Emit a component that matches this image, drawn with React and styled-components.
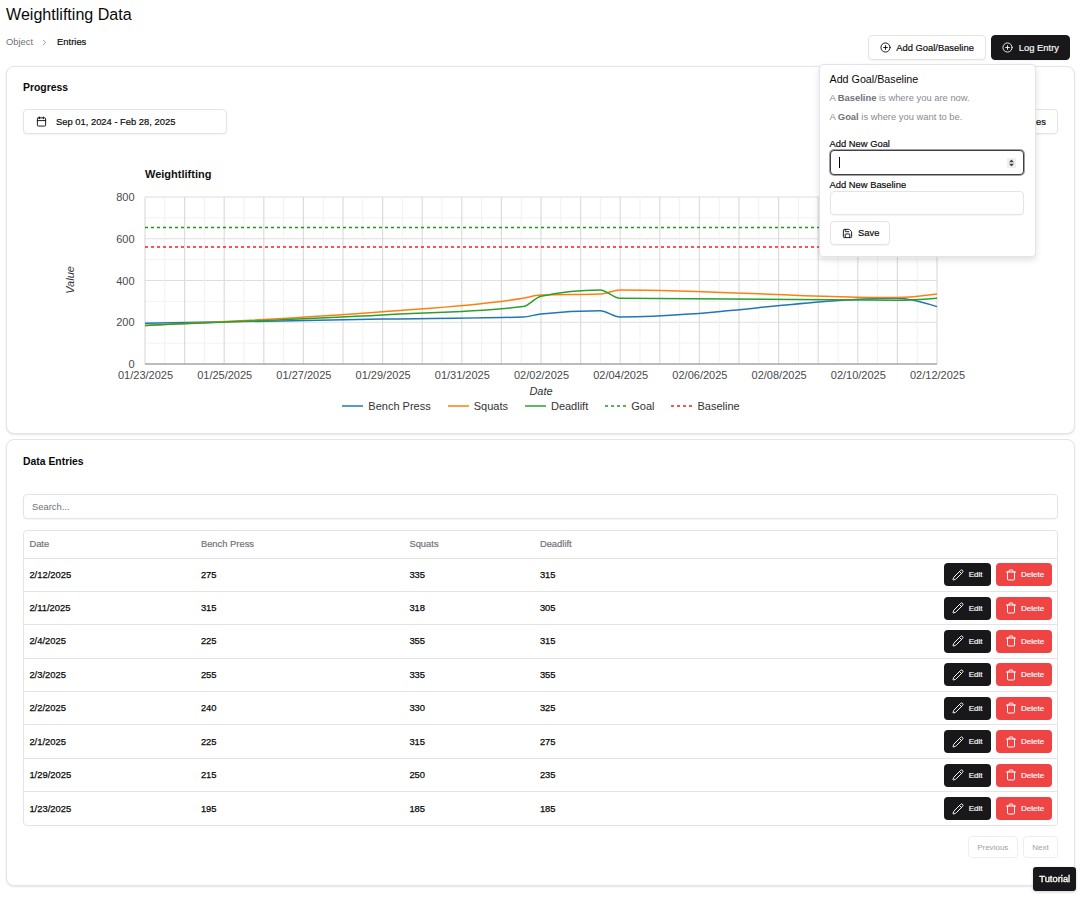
import { useMemo } from 'react';
import styled, { createGlobalStyle, css } from 'styled-components';
import { CirclePlus, Calendar, ChevronRight, Save, Pencil, Trash } from 'lucide-react';

const entries = [
	{ date: '2/12/2025', bench: 275, squats: 335, deadlift: 315 },
	{ date: '2/11/2025', bench: 315, squats: 318, deadlift: 305 },
	{ date: '2/4/2025', bench: 225, squats: 355, deadlift: 315 },
	{ date: '2/3/2025', bench: 255, squats: 335, deadlift: 355 },
	{ date: '2/2/2025', bench: 240, squats: 330, deadlift: 325 },
	{ date: '2/1/2025', bench: 225, squats: 315, deadlift: 275 },
	{ date: '1/29/2025', bench: 215, squats: 250, deadlift: 235 },
	{ date: '1/23/2025', bench: 195, squats: 185, deadlift: 185 },
];

// x position of each entry, newest first (the points don't sit exactly on day ticks)
const pointX = [937, 897, 620, 600, 541, 523, 382.6, 145];

const PLOT = { left: 145, right: 937, top: 197, bottom: 364 };
const DAY = (PLOT.right - PLOT.left) / 20;
const yOf = (v) => PLOT.bottom - (v / 800) * (PLOT.bottom - PLOT.top);

const xTicks = ['01/23/2025', '01/25/2025', '01/27/2025', '01/29/2025', '01/31/2025', '02/02/2025', '02/04/2025', '02/06/2025', '02/08/2025', '02/10/2025', '02/12/2025'];

const sign = (n) => (n < 0 ? -1 : 1);

// monotone cubic, same idea as d3 curveMonotoneX
function monotonePath(pts) {
	const n = pts.length;
	const dx = [];
	const m = [];
	for (let i = 0; i < n - 1; i++) {
		dx[i] = pts[i + 1][0] - pts[i][0];
		m[i] = (pts[i + 1][1] - pts[i][1]) / dx[i];
	}
	const t = [m[0]];
	for (let i = 1; i < n - 1; i++) {
		const p = (m[i - 1] * dx[i] + m[i] * dx[i - 1]) / (dx[i - 1] + dx[i]);
		t[i] = (sign(m[i - 1]) + sign(m[i])) * Math.min(Math.abs(m[i - 1]), Math.abs(m[i]), 0.5 * Math.abs(p)) || 0;
	}
	t[n - 1] = m[n - 2];
	t[0] = (3 * m[0] - t[1]) / 2;
	t[n - 1] = (3 * m[n - 2] - t[n - 2]) / 2;
	let d = `M${pts[0][0]},${pts[0][1]}`;
	for (let i = 0; i < n - 1; i++) {
		const h = dx[i] / 3;
		d += `C${pts[i][0] + h},${pts[i][1] + h * t[i]} ${pts[i + 1][0] - h},${pts[i + 1][1] - h * t[i + 1]} ${pts[i + 1][0]},${pts[i + 1][1]}`;
	}
	return d;
}

const series = [
	{ key: 'bench', name: 'Bench Press', color: '#1f77b4' },
	{ key: 'squats', name: 'Squats', color: '#ff7f0e' },
	{ key: 'deadlift', name: 'Deadlift', color: '#2ca02c' },
];

const legend = [
	...series,
	{ key: 'goal', name: 'Goal', color: '#1a9a1a', dashed: true },
	{ key: 'baseline', name: 'Baseline', color: '#ff1a1a', dashed: true },
];

function Chart() {
	const paths = useMemo(
		() =>
			series.map((s) => {
				const pts = entries.map((e, i) => [pointX[i], yOf(e[s.key])]).reverse();
				return { ...s, d: monotonePath(pts) };
			}),
		[]
	);

	const verticals = Array.from({ length: 41 }, (_, i) => i);
	const horizontals = Array.from({ length: 9 }, (_, i) => i);

	return (
		<svg width='1035' height='238' viewBox='23 160 1035 238' style={{ display: 'block' }}>
			<text x={PLOT.left} y={178} fontSize='11' fontWeight='700' fill='#111'>
				Weightlifting
			</text>
			{horizontals.map((i) => (
				<line
					key={i}
					x1={PLOT.left}
					x2={PLOT.right}
					y1={yOf(i * 100)}
					y2={yOf(i * 100)}
					stroke={i % 2 ? '#f3f3f3' : '#dedede'}
					strokeWidth={i % 2 ? 1 : 1.1}
				/>
			))}
			{verticals.map((i) => (
				<line
					key={i}
					x1={PLOT.left + (i * DAY) / 2}
					x2={PLOT.left + (i * DAY) / 2}
					y1={PLOT.top}
					y2={PLOT.bottom}
					stroke={i % 2 ? '#f1f1f1' : '#dcdcdc'}
					strokeWidth={i % 2 ? 1 : 1.2}
				/>
			))}
			<line x1={PLOT.left} x2={PLOT.right} y1={PLOT.bottom} y2={PLOT.bottom} stroke='#8a8a8a' strokeWidth='1' />
			<line x1={PLOT.left} x2={PLOT.right} y1={227.5} y2={227.5} stroke='#1a9a1a' strokeWidth='1.5' strokeDasharray='3 3' />
			<line x1={PLOT.left} x2={PLOT.right} y1={247} y2={247} stroke='#ff1a1a' strokeWidth='1.3' strokeDasharray='3 3' />
			{paths.map((p) => (
				<path key={p.key} d={p.d} fill='none' stroke={p.color} strokeWidth='1.5' />
			))}
			{[0, 200, 400, 600, 800].map((v) => (
				<text key={v} x={134.5} y={yOf(v) + 4} fontSize='11' fill='#4a4a4a' textAnchor='end'>
					{v}
				</text>
			))}
			{xTicks.map((t, i) => (
				<text key={t} x={PLOT.left + 0.5 + i * 2 * DAY} y={379} fontSize='11' fill='#4a4a4a' textAnchor='middle'>
					{t}
				</text>
			))}
			<text x={541} y={395} fontSize='11' fontStyle='italic' fill='#333' textAnchor='middle'>
				Date
			</text>
			<text transform='translate(74 280) rotate(-90)' fontSize='11' fontStyle='italic' fill='#333' textAnchor='middle'>
				Value
			</text>
		</svg>
	);
}

export default function App() {
	return (
		<Page>
			<GlobalStyle />
			<Header>
				<div>
					<Title>Weightlifting Data</Title>
					<Breadcrumbs>
						<span>Object</span>
						<ChevronRight size={9} />
						<strong>Entries</strong>
					</Breadcrumbs>
				</div>
				<Actions>
					<Button>
						<CirclePlus size={11} />
						Add Goal/Baseline
					</Button>
					<Button $dark>
						<CirclePlus size={11} />
						Log Entry
					</Button>
					<Popover>
						<PopoverTitle>Add Goal/Baseline</PopoverTitle>
						<Hint>
							A <b>Baseline</b> is where you are now.
						</Hint>
						<Hint>
							A <b>Goal</b> is where you want to be.
						</Hint>
						<Field $first>
							<label>Add New Goal</label>
							<InputWrap>
								<Input type='number' $focused />
								<Caret />
								<Spinner>
									<svg width='9' height='10' viewBox='0 0 9 10'>
										<path d='M4.5 1.5 7 4.2H2zM4.5 8.5 2 5.8h5z' fill='#444' />
									</svg>
								</Spinner>
							</InputWrap>
						</Field>
						<Field>
							<label>Add New Baseline</label>
							<InputWrap>
								<Input type='number' />
							</InputWrap>
						</Field>
						<SaveButton>
							<Save size={11} />
							Save
						</SaveButton>
					</Popover>
				</Actions>
			</Header>

			<Card>
				<CardTitle>Progress</CardTitle>
				<Toolbar>
					<DateButton>
						<Calendar size={11} />
						Sep 01, 2024 - Feb 28, 2025
					</DateButton>
					<Button>Entries</Button>
				</Toolbar>
				<ChartWrap>
					<Chart />
				</ChartWrap>
				<Legend>
					{legend.map((l) => (
						<LegendItem key={l.key}>
							<svg width='21' height='2' viewBox='0 0 21 2'>
								<line x1='0' x2='21' y1='1' y2='1' stroke={l.color} strokeWidth='1.5' strokeDasharray={l.dashed ? '3 3' : undefined} />
							</svg>
							{l.name}
						</LegendItem>
					))}
				</Legend>
			</Card>

			<Card $second>
				<CardTitle>Data Entries</CardTitle>
				<Search placeholder='Search...' />
				<TableWrap>
					<Table>
						<thead>
							<tr>
								<Th $w={171.5}>Date</Th>
								<Th $w={208.5}>Bench Press</Th>
								<Th $w={130.5}>Squats</Th>
								<Th $w={200}>Deadlift</Th>
								<Th />
							</tr>
						</thead>
						<tbody>
							{entries.map((e) => (
								<tr key={e.date}>
									<Td>{e.date}</Td>
									<Td>{e.bench}</Td>
									<Td>{e.squats}</Td>
									<Td>{e.deadlift}</Td>
									<Td>
										<RowActions>
											<RowButton>
												<Pencil size={12} />
												Edit
											</RowButton>
											<RowButton $danger>
												<Trash size={12} />
												Delete
											</RowButton>
										</RowActions>
									</Td>
								</tr>
							))}
						</tbody>
					</Table>
				</TableWrap>
				<Pagination>
					<PageButton $w={49.5}>Previous</PageButton>
					<PageButton $w={35}>Next</PageButton>
				</Pagination>
			</Card>

			<Tutorial>Tutorial</Tutorial>
		</Page>
	);
}

// weight 500 in the original: regular metrics, slightly heavier strokes
const medium = css`
	font-weight: 400;
	-webkit-text-stroke: 0.18px currentColor;
`;

const GlobalStyle = createGlobalStyle`
	html, body {
		margin: 0;
		background: #fff;
		color: #0a0a0a;
		font-family: "Liberation Sans", Arial, sans-serif;
	}
	* {
		box-sizing: border-box;
	}
`;

const Page = styled.div`
	padding: 0 5px 0 6px;
	height: 897px;
	overflow: hidden;
`;

const Header = styled.header`
	display: flex;
	justify-content: space-between;
	height: 66px;
`;

const Title = styled.h1`
	margin: 5px 0 0;
	font-size: 16.08px;
	line-height: 18px;
	font-weight: 400;
`;

const Breadcrumbs = styled.nav`
	display: flex;
	align-items: center;
	gap: 6px;
	margin-top: 13px;
	font-size: 9.38px;
	line-height: 12px;
	color: #71717a;

	svg {
		margin: 0 1px;
	}

	strong {
		${medium}
		margin-left: 1px;
		color: #0a0a0a;
	}
`;

const Actions = styled.div`
	position: relative;
	align-self: flex-end;
	display: flex;
	align-items: flex-end;
	gap: 5.5px;
	margin-right: 5px;
	margin-bottom: 6px;
`;

const Button = styled.button`
	${medium}
	display: inline-flex;
	align-items: center;
	gap: 5.5px;
	height: 25px;
	padding: 0 ${(p) => (p.$dark ? '10px' : '11px')};
	border: 1px solid ${(p) => (p.$dark ? '#18181b' : '#e4e4e7')};
	border-radius: 4px;
	background: ${(p) => (p.$dark ? '#18181b' : '#fff')};
	color: ${(p) => (p.$dark ? '#fafafa' : '#0a0a0a')};
	font-family: "Liberation Sans", Arial, sans-serif;
	font-size: 9.38px;
	box-shadow: 0 1px 1px rgba(0, 0, 0, 0.05);
	white-space: nowrap;
`;

const Popover = styled.div`
	position: absolute;
	z-index: 5;
	top: calc(100% + 4px);
	right: 34.5px;
	width: 217px;
	height: 193px;
	padding: 8px 10px;
	background: #fff;
	border: 1px solid #e4e4e7;
	border-radius: 4px;
	box-shadow: 0 3px 6px rgba(0, 0, 0, 0.12);
`;

const PopoverTitle = styled.div`
	font-size: 10.72px;
	line-height: 12px;
	margin-bottom: 8px;
`;

const Hint = styled.p`
	margin: 0 0 8px;
	font-size: 9.38px;
	line-height: 11px;
	color: #8a8a92;

	b {
		font-weight: 700;
		color: #71717a;
	}
`;

const Field = styled.div`
	margin-top: ${(p) => (p.$first ? '16px' : '5px')};

	label {
		${medium}
		display: block;
		font-size: 9.38px;
		line-height: 10px;
		margin-bottom: 1px;
	}
`;

const InputWrap = styled.div`
	position: relative;
`;

const Input = styled.input`
	display: block;
	width: 194px;
	height: 24.5px;
	padding: 0 8px;
	border: 1px solid ${(p) => (p.$focused ? '#3f3f46' : '#e4e4e7')};
	border-radius: 4px;
	background: #fff;
	font: 400 9.38px "Liberation Sans", Arial, sans-serif;
	box-shadow: ${(p) => (p.$focused ? '0 0 0 1px #a1a1aa' : '0 1px 1px rgba(0, 0, 0, 0.04)')};
	appearance: textfield;

	&::-webkit-inner-spin-button {
		appearance: none;
	}
`;

const Caret = styled.span`
	position: absolute;
	left: 9px;
	top: 7px;
	width: 1px;
	height: 11px;
	background: #000;
`;

const Spinner = styled.span`
	position: absolute;
	right: 8.5px;
	top: 7.5px;
	display: flex;
	width: 9px;
	height: 10px;
	background: #f0f0f0;
`;

const SaveButton = styled(Button)`
	margin-top: 6px;
	height: 24px;
	padding: 0 10px 0 11px;
`;

const Card = styled.section`
	margin-top: ${(p) => (p.$second ? '5.5px' : '0')};
	padding: ${(p) => (p.$second ? '15.5px' : '14.5px')} 16px 16px;
	height: ${(p) => (p.$second ? '447px' : '367.5px')};
	border: 1px solid #e4e4e7;
	border-radius: 8px;
	background: #fff;
	box-shadow: 0 1px 2px rgba(0, 0, 0, 0.1);
`;

const CardTitle = styled.h2`
	margin: 0;
	font-size: 10.4px;
	line-height: 11px;
	font-weight: 700;
`;

const Toolbar = styled.div`
	display: flex;
	justify-content: space-between;
	margin-top: 16.5px;
`;

const DateButton = styled(Button)`
	width: 204px;
	gap: 9px;
	padding: 0 12px;
`;

const ChartWrap = styled.div`
	margin-top: 26px;
`;

const Legend = styled.div`
	display: flex;
	justify-content: center;
	align-items: center;
	gap: 17px;
	width: 1036px;
	font-size: 11px;
	line-height: 16px;
	color: #333;
`;

const LegendItem = styled.span`
	display: inline-flex;
	align-items: center;
	gap: 5px;
`;

const Search = styled.input`
	display: block;
	width: 100%;
	height: 24.5px;
	margin-top: 27.5px;
	padding: 1px 8px 0;
	border: 1px solid #e4e4e7;
	border-radius: 4px;
	font: 400 9.38px "Liberation Sans", Arial, sans-serif;
	box-shadow: 0 1px 1px rgba(0, 0, 0, 0.04);

	&::placeholder {
		color: #71717a;
	}
`;

const TableWrap = styled.div`
	margin-top: 11px;
	border: 1px solid #e4e4e7;
	border-radius: 4px;
	overflow: hidden;
`;

const Table = styled.table`
	width: 100%;
	border-collapse: collapse;
	table-layout: fixed;
`;

const Th = styled.th`
	${medium}
	width: ${(p) => (p.$w ? `${p.$w}px` : 'auto')};
	height: 27.5px;
	padding: 0 5.4px;
	text-align: left;
	font-size: 9.38px;
	color: #71717a;
	border-bottom: 1px solid #e4e4e7;
`;

const Td = styled.td`
	${medium}
	-webkit-text-stroke-width: 0.25px;
	height: 33.4px;
	padding: 0 5.4px;
	font-size: 9.38px;
	color: #0a0a0a;

	tr:not(:last-child) > & {
		border-bottom: 1px solid #e4e4e7;
	}
`;

const RowActions = styled.div`
	display: flex;
	justify-content: flex-end;
	gap: 5.5px;
	margin-right: -0.8px;
`;

const RowButton = styled.button`
	${medium}
	display: inline-flex;
	align-items: center;
	justify-content: center;
	gap: 4.5px;
	width: ${(p) => (p.$danger ? '56px' : '47px')};
	height: 23px;
	padding: 0;
	border: 0;
	border-radius: 4px;
	background: ${(p) => (p.$danger ? '#ef4444' : '#18181b')};
	color: #fafafa;
	font-family: "Liberation Sans", Arial, sans-serif;
	font-size: 8.04px;
`;

const Pagination = styled.div`
	display: flex;
	justify-content: flex-end;
	gap: 5.5px;
	margin-top: 10px;
`;

const PageButton = styled.button`
	width: ${(p) => p.$w}px;
	height: 22px;
	padding: 0;
	border: 1px solid #eeeef0;
	border-radius: 4px;
	background: #fff;
	color: #a1a1aa;
	font: 400 8.04px "Liberation Sans", Arial, sans-serif;
`;

const Tutorial = styled.button`
	${medium}
	-webkit-text-stroke-width: 0.35px;
	position: fixed;
	right: 4.5px;
	bottom: 6px;
	width: 42.5px;
	height: 24px;
	padding: 0 0 0 1px;
	border: 0;
	border-radius: 3px;
	background: #18181b;
	color: #fafafa;
	font-family: "Liberation Sans", Arial, sans-serif;
	font-size: 9.38px;
	box-shadow: 0 1px 3px rgba(0, 0, 0, 0.2);
`;
